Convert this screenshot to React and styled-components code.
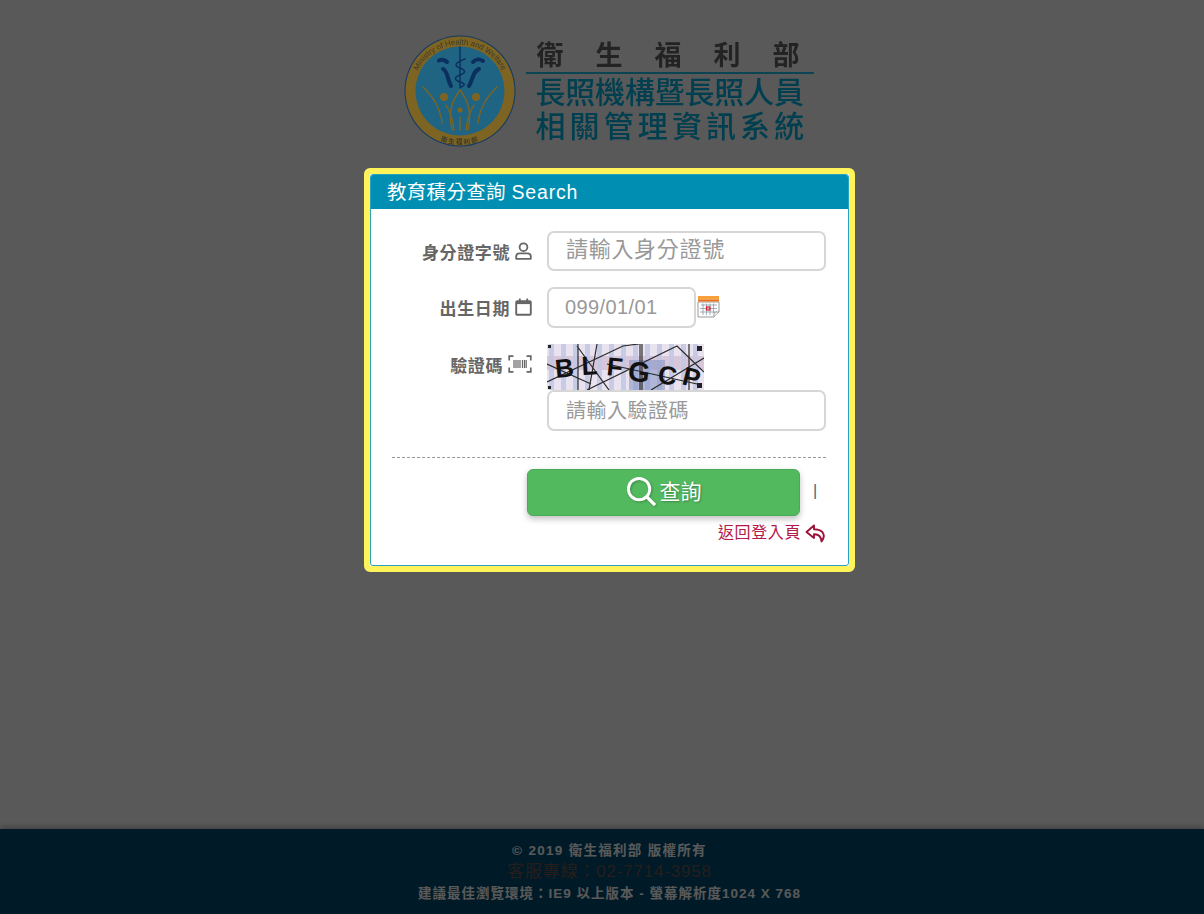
import React from 'react';
import styled, { createGlobalStyle } from 'styled-components';

const GlobalStyle = createGlobalStyle`
  html, body { margin: 0; padding: 0; height: 100%; }
  body { background: #fff; font-family: "Liberation Sans", "Noto Sans CJK TC", sans-serif; }
  * { box-sizing: border-box; }
`;

const Page = styled.div`display:flex;flex-direction:column;min-height:914px;height:100vh;`;
const Overlay = styled.div`position:fixed;inset:0;background:rgba(0,0,0,0.65);z-index:1;`;
const Main = styled.main`flex:1;display:flex;flex-direction:column;align-items:center;padding-left:15px;`;

// Logo
const Logo = styled.div`position:relative;z-index:2;display:flex;align-items:flex-start;gap:10px;margin:35px 0 0 -2px;height:133px;`;
const LogoText = styled.div`width:288px;display:flex;flex-direction:column;margin-top:1px;`;
const Ministry = styled.div`height:36px;padding-left:11px;font-size:27px;line-height:36px;font-weight:700;letter-spacing:32px;color:#232323;white-space:nowrap;font-family:"Noto Sans CJK TC",sans-serif;`;
const LogoRule = styled.div`height:2px;background:#0b4554;margin-bottom:-1px;`;
const SystemLine = styled.div`padding-left:10px;height:34px;font-size:30px;line-height:34px;font-weight:500;color:#003f50;white-space:nowrap;letter-spacing:${p => p.$spacing}px;font-family:"Noto Sans CJK TC",sans-serif;`;

// Card
const Card = styled.section`position:relative;z-index:2;width:491px;height:404px;background:#fff;border:6px solid #fff35c;border-radius:6px;`;
const CardInner = styled.div`height:100%;border:1px solid #2ba3c0;border-radius:3px;background:#fff;`;
const CardHeader = styled.h2`margin:0;height:34px;padding-left:16px;background:#008fb2;color:#fff;font-size:19.5px;line-height:34px;font-weight:400;letter-spacing:.3px;border-radius:2px 2px 0 0;`;
const HeaderLatin = styled.span`letter-spacing:.8px;`;
const CardBody = styled.div`padding:22px 22px 0 21px;`;
const Row = styled.div`display:grid;grid-template-columns:140px 1fr;column-gap:15px;margin-bottom:${p => p.$gap}px;`;
const Label = styled.label`display:flex;align-items:center;justify-content:flex-end;gap:5px;height:40px;font-size:17px;font-weight:700;letter-spacing:.6px;color:#666;`;
const InputLine = styled.div`display:flex;align-items:center;gap:1px;svg{margin-top:-2px;}`;
const Input = styled.input`
  display:block;width:${p => p.$width || 279}px;height:${p => p.$height || 41}px;padding:${p => p.$top || 0}px 0 ${p => p.$bottom || 0}px ${p => p.$pad || 17}px;
  border:2px solid #d6d6d6;border-radius:7px;background:#fff;outline:none;
  font-family:inherit;font-size:${p => p.$size}px;letter-spacing:${p => p.$spacing}px;color:#444;
  &::placeholder{color:#999;opacity:1;}
`;
const CaptchaStack = styled.div`display:flex;flex-direction:column;`;
const Divider = styled.div`border-top:1px dashed #999;margin-top:26px;`;
const ActionRow = styled.div`display:flex;align-items:center;margin:11px 0 0 135px;`;
const SearchButton = styled.button`
  display:flex;align-items:center;justify-content:center;gap:3px;width:273px;height:47px;padding:0 0 5px;
  background:#53b95f;border:1px solid #4aa957;border-radius:6px;box-shadow:0 3px 6px rgba(0,0,0,0.25);
  color:#fff;font-family:inherit;font-size:21px;text-shadow:1px 1px 2px rgba(0,0,0,0.3);
  svg{filter:drop-shadow(1px 1px 1px rgba(0,0,0,0.25));margin-top:3px;}
`;
const Pipe = styled.span`margin:-3px 0 0 13px;font-size:16px;color:#1f6f80;`;
const BackRow = styled.div`display:flex;justify-content:flex-end;margin:7px 0 0 0;`;
const BackLink = styled.a`display:flex;align-items:center;gap:4px;font-size:16px;letter-spacing:.6px;color:#b3184a;line-height:20px;`;

// Footer
const Footer = styled.footer`height:85px;padding:12px 0 0 15px;background:#004c70;text-align:center;color:#fff;box-shadow:0 -2px 6px rgba(0,0,0,.3);`;
const FootLine = styled.div`font-size:${p => p.$size}px;line-height:${p => p.$line}px;font-weight:${p => p.$weight};letter-spacing:${p => p.$spacing}px;color:${p => p.$color};`;

const Emblem = () => (
  <svg width="112" height="112" viewBox="0 0 112 112">
    <defs>
      <path id="ringTop" d="M12 40A47 47 0 0 1 100 40" />
      <path id="ringBottom" d="M6 74A53 53 0 0 0 106 74" />
    </defs>
    <circle cx="56" cy="56" r="55.5" fill="#123a63" />
    <circle cx="56" cy="56" r="54.5" fill="#7d6423" />
    <circle cx="56" cy="56" r="44.5" fill="#1f6482" />
    <text fontSize="7.8" fill="#3a3a2a" fontFamily="Liberation Sans" textAnchor="middle">
      <textPath href="#ringTop" startOffset="50%">Ministry of Health and Welfare</textPath>
    </text>
    <text fontSize="6.5" fill="#3a3a2a" fontFamily="Noto Sans CJK TC" fontWeight="700" letterSpacing="1.5" textAnchor="middle">
      <textPath href="#ringBottom" startOffset="50%">衛生福利部</textPath>
    </text>
    <g fill="none" stroke="#0b2f5f" strokeLinecap="round">
      <path d="M56 12V53" strokeWidth="1.4" />
      <path d="M61 24C50 28 50 31 56 33S62 38 56 40 50 45 56 47 61 50 57 52" strokeWidth="1.5" />
      <path d="M35 25.5C38 24 41 25 43 27" strokeWidth="4" />
      <path d="M39 34C44 36 43 44 47 51" strokeWidth="4" />
      <path d="M69 27C72 23.5 76 24 79 26" strokeWidth="4" />
      <path d="M75 34C69 36 69 44 65 51" strokeWidth="4" />
    </g>
    <g fill="none" stroke="#7d6423" strokeWidth="1.4" strokeLinecap="round">
      <path d="M19 52C29 62 36 72 38 88" />
      <path d="M93 52C83 62 76 72 74 88" />
      <path d="M56 55C48 66 44 76 48 95" />
      <path d="M56 55C64 66 68 76 64 95" />
      <path d="M42 70C47 78 49 85 50 95" />
      <path d="M70 70C65 78 63 85 62 95" />
      <path d="M56 82V95" />
    </g>
    <g fill="#7d6423">
      <circle cx="40" cy="62" r="4" />
      <circle cx="72" cy="62" r="4" />
      <circle cx="56" cy="75" r="2.6" />
    </g>
  </svg>
);

const UserIcon = () => (
  <svg width="17" height="18" viewBox="0 0 17 18" fill="none" stroke="#666" strokeWidth="1.8">
    <circle cx="8.5" cy="5.2" r="3.9" />
    <path d="M1.2 16.8V14.5C1.2 12.6 2.8 11.4 4.6 11.4H12.4C14.2 11.4 15.8 12.6 15.8 14.5V16.8Z" strokeLinejoin="round" />
  </svg>
);

const DateIcon = () => (
  <svg width="17" height="18" viewBox="0 0 17 18" fill="none" stroke="#666">
    <rect x="1.2" y="3.2" width="14.6" height="13.6" strokeWidth="1.9" rx="1" />
    <path d="M1 4.8H16" strokeWidth="2.6" />
    <path d="M4.8 .5V3M12.2 .5V3" strokeWidth="1.8" />
  </svg>
);

const BarcodeIcon = () => (
  <svg width="24" height="18" viewBox="0 0 24 18" fill="none" stroke="#666">
    <path d="M5.5 1.2H1.2V5.5M1.2 12.5V16.8H5.5M18.5 1.2H22.8V5.5M22.8 12.5V16.8H18.5" strokeWidth="1.7" />
    <path d="M6 5V13M8 5V13M10 5V13M12 5V13M14.5 5V13M16.5 5V13M18.2 5V13" strokeWidth="1.2" />
  </svg>
);

const CalendarPicker = () => (
  <svg width="23" height="23" viewBox="0 0 23 23">
    <path d="M1 7H22V17L17 22H1Z" fill="#fff" stroke="#999" />
    <rect x="1" y="1" width="21" height="3.5" fill="#f9a03c" />
    <rect x="1" y="4.5" width="21" height="2" fill="#e8711c" />
    <path d="M4 10H20M3 13.5H20M3 17H16M6 8.5V20M9.5 8.5V20M13 8.5V20M16.5 8.5V18" stroke="#8a99a8" strokeWidth=".8" fill="none" />
    <rect x="9.5" y="12" width="3.5" height="3" fill="none" stroke="#d3202a" strokeWidth="1.2" />
    <path d="M17 22V17H22" fill="#eee" stroke="#999" />
  </svg>
);

const buildingStripes = Array.from({ length: 13 }, (_, i) => i * 12 + 2);
const captchaLetters = [
  { c: 'B', x: 9, y: 34, r: -6, s: 26 },
  { c: 'L', x: 35, y: 31, r: -3, s: 26 },
  { c: 'F', x: 59, y: 31, r: 6, s: 26 },
  { c: 'G', x: 80, y: 36, r: 8, s: 28 },
  { c: 'C', x: 110, y: 39, r: 8, s: 26 },
  { c: 'P', x: 134, y: 40, r: 14, s: 26 },
];

const Captcha = () => (
  <svg width="157" height="46" viewBox="0 0 157 46" style={{ display: 'block' }}>
    <rect width="157" height="46" fill="#e9e3ef" />
    <rect y="12" width="157" height="14" fill="#cbaec9" opacity=".55" />
    {buildingStripes.map(x => (
      <rect key={x} x={x} width="5" height="46" fill={x % 4 === 2 ? '#c3c8e4' : '#f8f7fb'} opacity=".9" />
    ))}
    <rect x="82" y="16" width="36" height="30" fill="#7f92c4" opacity=".55" />
    <g stroke="#2a2a2a" strokeWidth="1.2" fill="none">
      <path d="M0 20L44 40M30 2L62 46M50 0L42 46M31 0V46M93 0V46M95 0V46M142 0V46" />
      <path d="M0 38L76 2L92 0M40 46L130 2L157 28M104 46L157 14M60 20L150 40" />
    </g>
    <g fill="#111" fontFamily="Liberation Sans" fontWeight="700">
      {captchaLetters.map(l => (
        <text key={l.c} x={l.x} y={l.y} fontSize={l.s} transform={`rotate(${l.r} ${l.x} ${l.y})`}>{l.c}</text>
      ))}
    </g>
    <g fill="#222">
      <rect x="1" y="1" width="3" height="3" />
      <rect x="150" y="2" width="5" height="5" />
      <rect x="1" y="42" width="3" height="3" />
      <rect x="150" y="39" width="5" height="5" />
    </g>
  </svg>
);

const SearchIcon = () => (
  <svg width="31" height="31" viewBox="0 0 32 32" fill="none" stroke="#fff">
    <circle cx="13.5" cy="13.5" r="11" strokeWidth="3" />
    <path d="M21.5 21.5L30 30" strokeWidth="3.4" />
  </svg>
);

const ReplyIcon = () => (
  <svg width="21" height="19" viewBox="0 0 21 19" fill="none" stroke="#9c1238" strokeWidth="1.9" strokeLinejoin="round">
    <path d="M9 1.5L1.5 8L9 14V10.2C13 10 16 11.5 16.5 17.5C20 13 20.5 5.5 9 5.2Z" />
  </svg>
);

export default function App() {
  return (
    <Page>
      <GlobalStyle />
      <Overlay />
      <Main>
        <Logo>
          <Emblem />
          <LogoText>
            <Ministry>衛生福利部</Ministry>
            <LogoRule />
            <SystemLine $spacing={-0.2}>長照機構暨長照人員</SystemLine>
            <SystemLine $spacing={4.1}>相關管理資訊系統</SystemLine>
          </LogoText>
        </Logo>
        <Card>
          <CardInner>
            <CardHeader>教育積分查詢 <HeaderLatin>Search</HeaderLatin></CardHeader>
            <CardBody>
              <Row $gap={16}>
                <Label>身分證字號 <UserIcon /></Label>
                <Input $height={40} $bottom={2} $size={22} $spacing={0.7} placeholder="請輸入身分證號" />
              </Row>
              <Row $gap={16}>
                <Label>出生日期 <DateIcon /></Label>
                <InputLine>
                  <Input $width={149} $pad={16} $size={20} $spacing={0.4} placeholder="099/01/01" />
                  <CalendarPicker />
                </InputLine>
              </Row>
              <Row $gap={0}>
                <Label>驗證碼 <BarcodeIcon /></Label>
                <CaptchaStack>
                  <Captcha />
                  <Input $top={2} $size={20} $spacing={0.5} placeholder="請輸入驗證碼" />
                </CaptchaStack>
              </Row>
              <Divider />
              <ActionRow>
                <SearchButton type="button"><SearchIcon />查詢</SearchButton>
                <Pipe>|</Pipe>
              </ActionRow>
              <BackRow>
                <BackLink>返回登入頁 <ReplyIcon /></BackLink>
              </BackRow>
            </CardBody>
          </CardInner>
        </Card>
      </Main>
      <Footer>
        <FootLine $size={13.5} $line={20} $weight={700} $spacing={1.3}>© 2019 衛生福利部 版權所有</FootLine>
        <FootLine $size={17} $line={22} $weight={400} $spacing={0.8} $color="#6b5650">客服專線：02-7714-3958</FootLine>
        <FootLine $size={13.5} $line={22} $weight={700} $spacing={1}>建議最佳瀏覽環境：IE9 以上版本 - 螢幕解析度1024 X 768</FootLine>
      </Footer>
    </Page>
  );
}
